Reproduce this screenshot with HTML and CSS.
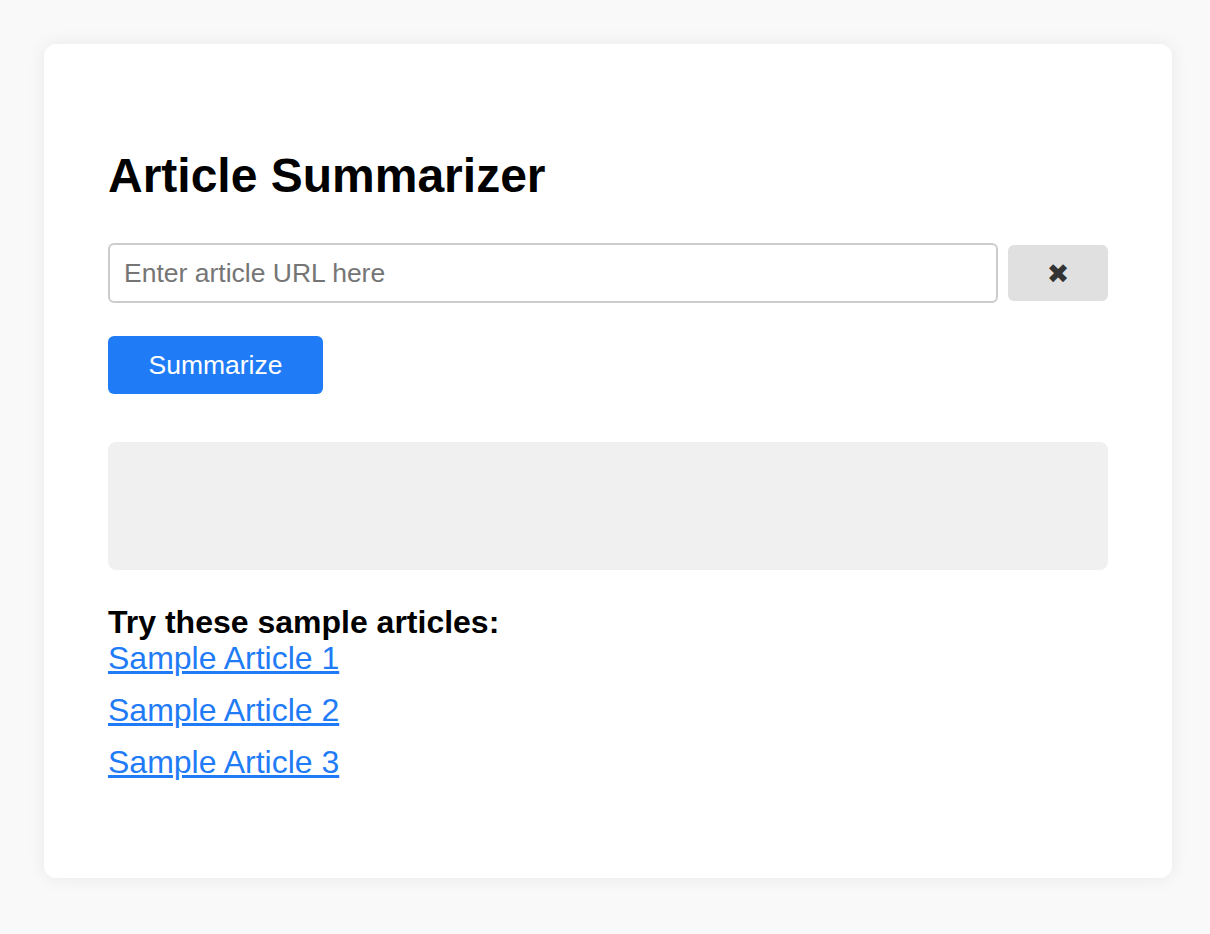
FILE: index.html
```html
<!DOCTYPE html>
<html lang="en">
<head>
<meta charset="utf-8">
<title>Article Summarizer</title>
<link rel="stylesheet" href="styles.css">
</head>
<body>
<main class="card">
  <h1 class="title">Article Summarizer</h1>
  <div class="url-row">
    <input class="url-input" type="text" placeholder="Enter article URL here">
    <button class="clear-btn" type="button">&#x2716;</button>
  </div>
  <button class="summarize-btn" type="button">Summarize</button>
  <div class="summary-box"></div>
  <section class="samples">
    <h2 class="samples-title">Try these sample articles:</h2>
    <a class="sample-link" href="#">Sample Article 1</a>
    <a class="sample-link" href="#">Sample Article 2</a>
    <a class="sample-link" href="#">Sample Article 3</a>
  </section>
</main>
</body>
</html>
```
FILE: styles.css
```css
html, body {
  margin: 0;
  padding: 0;
}
body {
  background: #f9f9f9;
  font-family: "Liberation Sans", Arial, sans-serif;
  padding: 44px 38px 44px 44px;
  box-sizing: border-box;
  min-height: 934px;
}
.card {
  background: #ffffff;
  border-radius: 12px;
  box-shadow: 0 0 18px rgba(0, 0, 0, 0.07);
  padding: 40px 64px 64px;
  box-sizing: border-box;
  height: 834px;
}
.title {
  margin: 64px 0 0;
  font-size: 48px;
  line-height: 56px;
  font-weight: bold;
  color: #000;
}
.url-row {
  display: flex;
  align-items: center;
  gap: 10px;
  margin-top: 39px;
}
.url-input {
  flex: 1;
  height: 60px;
  box-sizing: border-box;
  border: 2px solid #cccccc;
  border-radius: 6px;
  padding: 0 14px;
  font-family: inherit;
  font-size: 26.5px;
  color: #333;
  outline: none;
}
.url-input::placeholder {
  color: #757575;
}
.clear-btn {
  width: 100px;
  height: 56px;
  border: none;
  border-radius: 6px;
  background: #e0e0e0;
  color: #333333;
  font-size: 27px;
  font-family: "DejaVu Sans", sans-serif;
  padding: 0;
}
.summarize-btn {
  display: block;
  margin-top: 33px;
  height: 58px;
  width: 215px;
  border: none;
  border-radius: 6px;
  background: #1f7cf6;
  color: #ffffff;
  font-family: inherit;
  font-size: 26.5px;
  padding: 0;
}
.summary-box {
  margin-top: 48px;
  height: 128px;
  background: #f0f0f0;
  border-radius: 8px;
}
.samples {
  margin-top: 34px;
  display: flex;
  flex-direction: column;
  align-items: flex-start;
}
.samples-title {
  margin: 0;
  font-size: 32px;
  line-height: 36px;
  font-weight: bold;
  color: #000;
}
.sample-link {
  font-size: 32px;
  line-height: 36px;
  color: #1f7cf6;
  text-decoration: underline;
  margin-bottom: 16px;
}
```
